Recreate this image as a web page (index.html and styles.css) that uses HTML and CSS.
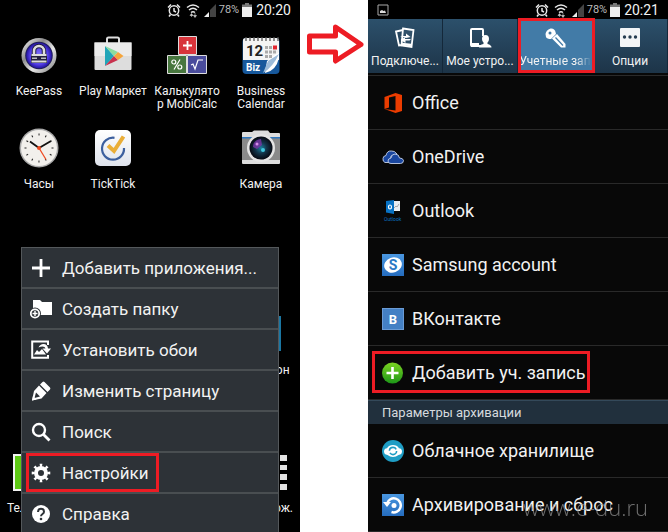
FILE: index.html
```html
<!DOCTYPE html>
<html lang="ru">
<head>
<meta charset="utf-8">
<title>Настройки учетных записей</title>
<link rel="stylesheet" href="styles.css">
</head>
<body>
<svg class="defs" aria-hidden="true">
  <defs>
    <symbol id="status" viewBox="0 0 50 18">
      <g fill="none" stroke="#e8e8e8" stroke-width="1.5">
        <circle cx="7" cy="9.500" r="4.700"/><path d="M7 7v3l2 1M1 6.500l3-3M13 6.500l-3-3M3.500 13.500L2 15.500M10.500 13.500l1.500 2"/>
        <path d="M20 6.500q6-5 12 0M22 9q4-3.500 8 0M24 11.500q2-1.500 4 0"/>
      </g>
      <path d="M24.500 16v-3M24.500 12.500l-1.500 2h3zM28 12v3M28 16.500l-1.500-2h3z" fill="#ccc" stroke="#ccc" stroke-width=".6"/>
      <path d="M49 3v13h-6V9z" fill="#444"/><path d="M37 16l5-5v5z" fill="#eee"/>
    </symbol>
    <symbol id="battery" viewBox="0 0 10 16">
      <path d="M3 1h4v1.500h3V5H0V2.500h3z" fill="#777"/><path d="M0 5h10v10H0z" fill="#eee"/>
    </symbol>
    <linearGradient id="silver" x1="0" y1="0" x2="1" y2="1"><stop offset="0" stop-color="#fff"/><stop offset=".35" stop-color="#8c8c8c"/><stop offset=".6" stop-color="#e8e8e8"/><stop offset="1" stop-color="#777"/></linearGradient>
    <radialGradient id="violet"><stop offset="0" stop-color="#8478ff"/><stop offset=".7" stop-color="#5540e8"/><stop offset="1" stop-color="#2414a0"/></radialGradient>
    <linearGradient id="blue" x1="0" y1="0" x2="0" y2="1"><stop offset="0" stop-color="#4a97e0"/><stop offset="1" stop-color="#256cbe"/></linearGradient>
    <linearGradient id="paper" x1="0" y1="0" x2="0" y2="1"><stop offset="0" stop-color="#fff"/><stop offset="1" stop-color="#dfe3ec"/></linearGradient>
    <radialGradient id="lens"><stop offset="0" stop-color="#1d7fa0"/><stop offset=".5" stop-color="#123348"/><stop offset="1" stop-color="#070912"/></radialGradient>
    <linearGradient id="green" x1="0" y1="0" x2="0" y2="1"><stop offset="0" stop-color="#7bd321"/><stop offset="1" stop-color="#1d9718"/></linearGradient>
  </defs>
</svg>
<main class="scene">
  <section class="phone home">
    <header class="status">
      <svg class="signals"><use href="#status"/></svg>
      <span class="percent">78%</span>
      <svg class="battery"><use href="#battery"/></svg>
      <time>20:20</time>
    </header>
    <nav class="apps">
      <a class="app" href="#">
        <svg viewBox="0 0 40 40"><circle cx="20" cy="20.500" r="17.500" fill="url(#silver)"/><circle cx="20" cy="20.500" r="13.800" fill="#222058"/><circle cx="20" cy="20.500" r="12.800" fill="url(#violet)"/><path d="M15 20v-4a5 5 0 0 1 10 0v4" fill="none" stroke="#201e40" stroke-width="4.500"/><path d="M15 20v-4a5 5 0 0 1 10 0v4" fill="none" stroke="#ddd" stroke-width="2.500"/><path d="M12 19h16v9H12z" fill="#23213f"/><path d="M12.500 20h15M12.500 26.500h15" stroke="#ddd" stroke-width="1.800"/><path d="M13 23.300h5M22 23.300h5" stroke="#bbb" stroke-width="1.500"/></svg>
        <span>KeePass</span></a>
      <a class="app" href="#">
        <svg viewBox="0 0 40 40"><path d="M14 8V4q0-1.500 1.500-1.500h9Q26 2.500 26 4v4" fill="none" stroke="#ddd" stroke-width="2"/><path d="M1.500 7.500h37V34q0 1-1 1h-35q-1 0-1-1z" fill="#ddd"/><path d="M1.500 7.500h37V21h-37z" fill="#ebebeb"/><path d="M12 11v20l9-10z" fill="#22a5b8"/><path d="M12 11l9 10 4-4z" fill="#8bdc9e"/><path d="M12 31l9-10 4 4z" fill="#c8314e"/><path d="M21 21l4-4 5.500 4-5.500 4z" fill="#f5a53c"/></svg>
        <span>Play Маркет</span></a>
      <a class="app" href="#">
        <svg viewBox="0 0 40 40"><g stroke="#ddd" stroke-width="1"><path d="M11.500 1.500h18v18h-18z" fill="#d8343b"/><path d="M.5 20.500h19v18H.5z" fill="#47763e"/><path d="M20.500 20.500h19v18h-19z" fill="#4a4c9c"/></g><path d="M16 10.500h9M20.500 6v9" stroke="#fff" stroke-width="1.800"/><g fill="none" stroke="#fff" stroke-width="1.200"><circle cx="6.800" cy="27" r="2"/><circle cx="12.800" cy="32" r="2"/><path d="M13 24.500L7 34.500M24 30l2-1 2 5 3-9h5"/></g></svg>
        <span>Калькулято<br>р MobiCalc</span></a>
      <a class="app" href="#">
        <svg viewBox="0 0 40 40"><rect x="1.500" y="3" width="37" height="36" rx="4" fill="#17589c"/><path d="M2 5q0-2 3-2h30q3 0 3 2v20H2z" fill="#f4f4f4"/><path d="M38 17v6Q35 36 24 38l2-12z" fill="#fff"/><path d="M38 19Q32 32 22 38l5-12z" fill="#9cbbd9"/><path d="M5 2v4M9 2v4M13 2v4M17 2v4M21 2v4M25 2v4M29 2v4M33 2v4M37 2v4" stroke="#555" stroke-width="1.300"/><text class="cal-number" x="5" y="21">12</text><text class="cal-name" x="5" y="36">Biz</text><path d="M24 11h3v3h-3zM28 11h3v3h-3zM24 15.500h3v3h-3zM28 15.500h3v3h-3zM32 15.500h3v3h-3zM24 20h3v3h-3zM28 20h3v3h-3z" fill="#aaa"/><path d="M32 10.500h4v4h-4z" fill="#e22630"/></svg>
        <span>Business<br>Calendar</span></a>
      <a class="app" href="#">
        <svg viewBox="0 0 40 40"><circle cx="20" cy="20" r="19.500" fill="#aaa"/><circle cx="20" cy="20" r="18" fill="#f2f0ec"/><circle cx="20" cy="20" r="13.500" fill="none" stroke="#222" stroke-width="2" pathLength="120" stroke-dasharray="1.500 8.500" stroke-dashoffset=".7"/><path d="M20 20l-9-6.500M20 20l12-7" stroke="#111" stroke-width="1.800"/><path d="M20 20l7 11.500" stroke="#f04b22" stroke-width="1.300"/><circle cx="20" cy="20" r="2" fill="#f04b22"/></svg>
        <span>Часы</span></a>
      <a class="app" href="#">
        <svg viewBox="0 0 40 40"><rect x="2" y="2" width="36" height="36" rx="5" fill="url(#paper)"/><path d="M21.500 9.800A11 11 0 1 0 31 20" fill="none" stroke="#3c5f9e" stroke-width="2.200"/><path d="M15 17.500l6 5.500L30.500 8.500" fill="none" stroke="#eaae38" stroke-width="4"/></svg>
        <span>TickTick</span></a>
      <a class="app last" href="#">
        <svg viewBox="0 0 40 40"><path d="M1 5q0-1 1-1h9l2-1.500h14L29 5h9q1 0 1 1v29q0 1-1 1H2q-1 0-1-1z" fill="#ddd"/><path d="M1 10h38v22H1z" fill="#8a8a8a"/><path d="M1 9h38v1.500H1z" fill="#2f77bd"/><circle cx="20" cy="20" r="14" fill="#e4e4e4"/><circle cx="20" cy="20" r="11.500" fill="url(#lens)"/><path d="M12 19q0-7 8-8l1 6-5 4z" fill="#7a35a8" opacity=".8"/><circle cx="22" cy="22" r="2" fill="#42c8e0"/><circle cx="16" cy="16" r="1.500" fill="#d68bea"/></svg>
        <span>Камера</span></a>
      <a class="app recorder" href="#">
        <svg viewBox="0 0 40 40"><path d="M0 2h40v35H0z" fill="#1b77a3"/></svg>
        <span>Диктофон</span></a>
    </nav>
    <nav class="dock">
      <a class="app" href="#"><svg viewBox="0 0 40 40"><rect x="3" y="3" width="35" height="35" fill="#5cc813" stroke="#f2f2f2" stroke-width="2"/></svg><span>Телефон</span></a>
      <a class="app" href="#"><svg viewBox="0 0 40 40"><path d="M31 3h7v6h-7zM31 13h7v5h-7zM31 22h7v6h-7zM31 32h7v6h-7z" fill="#e4e4e4"/></svg><span>Прилож.</span></a>
    </nav>
    <div class="menu" role="menu">
      <button role="menuitem"><svg viewBox="0 0 22 22"><path d="M11 2v18M2 11h18" stroke="#fff" stroke-width="2.800"/></svg>Добавить приложения...</button>
      <button role="menuitem"><svg viewBox="0 0 22 22"><path d="M3 2h7l2 2h10v13H3z" fill="#fff"/><circle cx="5" cy="15.500" r="6" fill="#2d3237"/><circle cx="5" cy="15.500" r="4.200" fill="none" stroke="#fff" stroke-width="1.800"/><path d="M5 13v5M2.500 15.500h5" stroke="#fff" stroke-width="1.400"/></svg>Создать папку</button>
      <button role="menuitem"><svg viewBox="0 0 22 22"><path d="M18 6V2.500H2.200v16.300H18V16" fill="none" stroke="#fff" stroke-width="2"/><path d="M4 15.500l3-4.500 2 2 3-3 4 5.500z" fill="#fff"/><path d="M8.500 8.500Q10 5 13.500 5q4 0 4.500 4.500h3L17 14.500 12.500 9.500h3Q15 7.500 12.500 7.500q-2 0-4 1z" fill="#fff"/></svg>Установить обои</button>
      <button role="menuitem"><svg viewBox="0 0 22 22"><path d="M12.500 2q1-.8 2 0l5.500 5.500q.8 1 0 2l-2.500 2.500-7.500-7.500zM9 5.500l7.500 7.500-5 5.500L2 20.500 4 11z" fill="#fff"/><path d="M4.500 18l1.500-5.500L10 16.500z" fill="#2d3237"/><path d="M2 20.500l1-4.500 3.500 3.500z" fill="#fff"/></svg>Изменить страницу</button>
      <button role="menuitem"><svg viewBox="0 0 22 22"><circle cx="9" cy="9" r="6" fill="none" stroke="#fff" stroke-width="2.400"/><path d="M13.500 13.500l6 6" stroke="#fff" stroke-width="2.800"/></svg>Поиск</button>
      <button class="marked" role="menuitem"><svg viewBox="0 0 22 22"><circle cx="11" cy="11" r="5" fill="none" stroke="#fff" stroke-width="4"/><circle cx="11" cy="11" r="7.800" fill="none" stroke="#fff" stroke-width="3" pathLength="80" stroke-dasharray="4 6" stroke-dashoffset="2"/></svg>Настройки</button>
      <button role="menuitem"><svg viewBox="0 0 22 22"><circle cx="11" cy="11" r="9" fill="#fff"/><path d="M8 9q0-3.300 3-3.300T14 8.700q0 1.300-1.500 2.300T11 13.300" fill="none" stroke="#2d3237" stroke-width="2"/><circle cx="11" cy="16" r="1.300" fill="#2d3237"/></svg>Справка</button>
    </div>
  </section>

  <div class="between">
    <svg viewBox="0 0 68 44"><path d="M9.500 14h26V5L61 22.500 35.500 39v-9h-26z" fill="none" stroke="#ed1c24" stroke-width="5" stroke-linejoin="round"/></svg>
  </div>

  <section class="phone settings">
    <header class="status">
      <svg class="notice" viewBox="0 0 12 12"><path d="M1 1h10v10H1z" fill="none" stroke="#aaa"/><path d="M3 9V7l2-1 1.500 1L8 6.500 9 9z" fill="#ddd"/></svg>
      <svg class="signals"><use href="#status"/></svg>
      <span class="percent">78%</span>
      <svg class="battery"><use href="#battery"/></svg>
      <time>20:21</time>
    </header>
    <nav class="tabs">
      <button><svg viewBox="0 0 24 24"><path d="M10 4L3 5.500l3 14 3-.5" fill="none" stroke="#fff" stroke-width="1.800"/><path d="M10 2.500l10.500 1.500-2 17L8.500 19.500z" fill="#31516a" stroke="#fff" stroke-width="1.800"/><path d="M7 10h6V7.500l4.500 3.500-4.500 1zM18 13h-6v-2L7.500 14l5 3v-2.500h4z" fill="#fff"/><path d="M9 18l9 1" stroke="#fff" stroke-width="2.500"/></svg><span>Подключе...</span></button>
      <button><svg viewBox="0 0 24 24"><path d="M13 20H4q-1 0-1-1V4q0-1 1-1h10q1 0 1 1v6" fill="none" stroke="#fff" stroke-width="2"/><path d="M3 17h8v4H3z" fill="#fff"/><path d="M17.500 9q3.500 0 3.500 4 0 2-1.500 3.500v1.500q4 1 4 3.500H11q0-2.500 4.500-3.500v-1.500Q14 15 14 13q0-4 3.500-4z" fill="#fff"/></svg><span>Мое устро...</span></button>
      <button class="marked current"><svg viewBox="0 0 24 24"><path d="M2.500 8Q3 4 7.500 2.500q4-.5 5 3.500l.5 2-5 5q-4 0-5-2z" fill="#fff"/><circle cx="7" cy="7" r="1.500" fill="#427ba7"/><path d="M9 12.500L14 8l8.500 10v3.500H18z" fill="#fff"/><path d="M12.500 11.500l7.500 8" stroke="#427ba7" stroke-width="1.200"/></svg><span>Учетные зап</span></button>
      <button><svg viewBox="0 0 24 24"><rect x="2" y="2" width="20" height="19" rx="1" fill="#f2f4f6"/><g fill="#243c50"><circle cx="6.500" cy="11" r="1.700"/><circle cx="12" cy="11" r="1.700"/><circle cx="17.500" cy="11" r="1.700"/></g></svg><span>Опции</span></button>
    </nav>
    <ul class="accounts">
      <li><a href="#"><svg viewBox="0 0 22 22"><path d="M2.500 5L13.500 1 20 3v16l-6.500 2L2.500 17l11 1.500V4L7 5.500v10L2.500 17z" fill="#eb3c00"/></svg>Office</a></li>
      <li><a href="#"><svg viewBox="0 0 22 22"><path d="M1 12.500Q1 10 4 9.500 5 4.500 9.500 5q3-.5 5.500 3l-6 2-1 6.500H3Q.5 15.500 1 12.500z" fill="#1a47a0" stroke="#c6d1e8" stroke-width=".9"/><path d="M6 15q0-2.500 3-3Q9.500 8 13 8q4 0 4.500 4 3.500 0 4 2.500 0 3-3 3H9Q6 17.500 6 15z" fill="#1a47a0" stroke="#c6d1e8" stroke-width=".9"/></svg>OneDrive</a></li>
      <li><a href="#"><svg viewBox="0 0 22 22"><path d="M11 1h7v10h-7z" fill="#e9eef2"/><path d="M12 8l2-2 1 1 2-3" fill="none" stroke="#aaa"/><path d="M4 1l8-1v14l-8-1.500z" fill="#0872c4"/><ellipse cx="8" cy="7" rx="1.500" ry="2" fill="none" stroke="#fff" stroke-width="1.200"/><text class="outlook-name" x="2" y="21">Outlook</text></svg>Outlook</a></li>
      <li><a href="#"><svg viewBox="0 0 22 22"><path d="M0 0h22v22H0z" fill="url(#blue)"/><ellipse cx="11" cy="11" rx="9" ry="7.500" fill="#fff" transform="rotate(-20 11 11)"/><text class="samsung-letter" x="11" y="16" text-anchor="middle">S</text></svg>Samsung account</a></li>
      <li><a href="#"><svg viewBox="0 0 22 22"><path d="M0 0h22v22H0z" fill="#6a9bd5"/><path d="M1 1h20v20H1z" fill="#4480c4"/><text class="vk-letter" x="11" y="16" text-anchor="middle">B</text></svg>ВКонтакте</a></li>
      <li class="marked"><a href="#"><svg viewBox="0 0 22 22"><circle cx="10.500" cy="11" r="10.500" fill="url(#green)"/><path d="M10.500 5v12M4.500 11h12" stroke="#fff" stroke-width="2.600"/></svg>Добавить уч. запись</a></li>
    </ul>
    <h2>Параметры архивации</h2>
    <ul class="accounts">
      <li><a href="#"><svg viewBox="0 0 22 22"><circle cx="11" cy="11" r="11" fill="#1f9dc4"/><path d="M5.500 15Q2 14.500 2 11.500T5 8.200Q7 5 11 5t6 3.200q3 .3 3 3.300t-3.500 3.500Q14 17 11 17t-5.500-2z" fill="#fff"/><circle cx="11" cy="11" r="3.600" fill="none" stroke="#1f9dc4" stroke-width="1.600" stroke-dasharray="9 2.300"/></svg>Облачное хранилище</a></li>
      <li><a href="#"><svg viewBox="0 0 22 22"><path d="M0 0h22v22H0z" fill="url(#blue)"/><path d="M5 9.500A7 7 0 1 1 9.500 18" fill="none" stroke="#fff" stroke-width="2.500"/><path d="M1 8h8l-4 5z" fill="#fff"/><circle cx="12" cy="11.500" r="2.500" fill="#fff"/></svg>Архивирование и сброс</a></li>
    </ul>
    <span class="watermark">www.e-du.ru</span>
  </section>
</main>
</body>
</html>
```
FILE: styles.css
```css
* { box-sizing: border-box; }

body {
  margin: 0;
  background: #fff;
  color: #f2f2f2;
  font-family: Roboto, "Noto Sans", sans-serif;
}

a { color: inherit; text-decoration: none; }

button {
  border: 0;
  color: inherit;
  font-family: inherit;
  cursor: pointer;
}

svg { flex: none; }

.defs { position: absolute; width: 0; height: 0; }

.scene {
  display: grid;
  grid-template-columns: 300fr 68fr 300fr;
  height: 100vh;
  overflow: hidden;
}

.phone {
  position: relative;
  overflow: hidden;
  background: #000;
}

.status {
  display: flex;
  align-items: center;
  justify-content: flex-end;
  height: 19px;
  padding-right: 9px;
}

.signals { width: 50px; height: 18px; margin-right: 2px; }
.percent { margin-right: 3px; color: #bbb; font-size: 11px; }
.battery { width: 10px; height: 16px; margin-right: 4px; }
.status time { font-size: 14px; }
.notice { width: 12px; height: 12px; margin-right: auto; margin-left: 9px; }

/* Home screen */
.apps {
  display: grid;
  grid-template-columns: repeat(4, 1fr);
  grid-auto-rows: 93px;
  padding: 16px 2px 0;
}

.app {
  display: flex;
  flex-direction: column;
  align-items: center;
  gap: 10px;
  font-size: 12px;
  line-height: 13px;
  text-align: center;
}

.app svg { width: 40px; height: 40px; }
.last { grid-column: 4; }
.recorder { grid-area: 4 / 4; }

.cal-number { font: bold 15px Roboto, sans-serif; fill: #222; }
.cal-name { font: bold 10px Roboto, sans-serif; fill: #fff; }

.dock {
  display: flex;
  justify-content: space-between;
  margin-top: 45px;
  padding: 0 7px;
}

/* Context menu */
.menu {
  position: absolute;
  top: 247px;
  right: 7%;
  left: 7%;
  border: 1px solid #54585b;
  background: #2d3237;
}

.menu button {
  display: flex;
  align-items: center;
  gap: 10px;
  width: 100%;
  height: 41px;
  padding: 0 8px;
  border-bottom: 2px solid #494e51;
  background: none;
  font-size: 17px;
}

.menu svg { width: 22px; height: 22px; }

.marked { position: relative; }

.marked::after {
  position: absolute;
  border: 3px solid #ed1c24;
  content: "";
}

.menu .marked::after { inset: 0 119px 0 4px; }

.between { padding-top: 22px; }
.between svg { display: block; width: 100%; }

/* Settings */
.settings { background: #080808; }
.settings .status { background: #000; }

.tabs {
  display: grid;
  grid-template-columns: repeat(4, 1fr);
  height: 57px;
  padding-bottom: 2px;
  border-bottom: 1px solid #2a2a2a;
  background: linear-gradient(#2c506b, #1d3448) content-box;
}

.tabs button {
  display: flex;
  flex-direction: column;
  align-items: center;
  gap: 3px;
  min-width: 0;
  padding: 7px 0 0;
  border-right: 1px solid #14283a;
  background: none;
  font-size: 12px;
  line-height: 16px;
}

.tabs svg { width: 24px; height: 24px; }
.tabs span { white-space: nowrap; }

.tabs .current {
  z-index: 1;
  background: #427ba7;
}

.tabs .marked::after { inset: -1px -3px 0 0; }
.current span { mask-image: linear-gradient(90deg, #000 80%, transparent); }

.accounts {
  margin: 0;
  padding: 0;
  list-style: none;
}

.accounts li {
  height: 54px;
  border-bottom: 1px solid #292929;
}

.accounts a {
  display: flex;
  align-items: center;
  gap: 8px;
  height: 100%;
  padding-left: 14px;
  font-size: 18px;
}

.accounts svg { width: 22px; height: 22px; }
.accounts .marked::after { inset: 5px 78px 6px 4px; }

.outlook-name { font: 5px Roboto, sans-serif; fill: #0872c4; }
.samsung-letter { font: bold 14px Roboto, sans-serif; fill: #2979c5; }
.vk-letter { font: bold 13px Roboto, sans-serif; fill: #fff; }

h2 {
  height: 24px;
  margin: 0;
  padding-left: 14px;
  border-top: 1px solid #34495a;
  background: #21303d;
  color: #d6dade;
  font-size: 13px;
  font-weight: 400;
  line-height: 23px;
}

.watermark {
  position: absolute;
  right: 20px;
  bottom: 10px;
  color: #999;
  font-family: "Open Sans", sans-serif;
  font-size: 22px;
  font-weight: 300;
  opacity: .7;
}
```
